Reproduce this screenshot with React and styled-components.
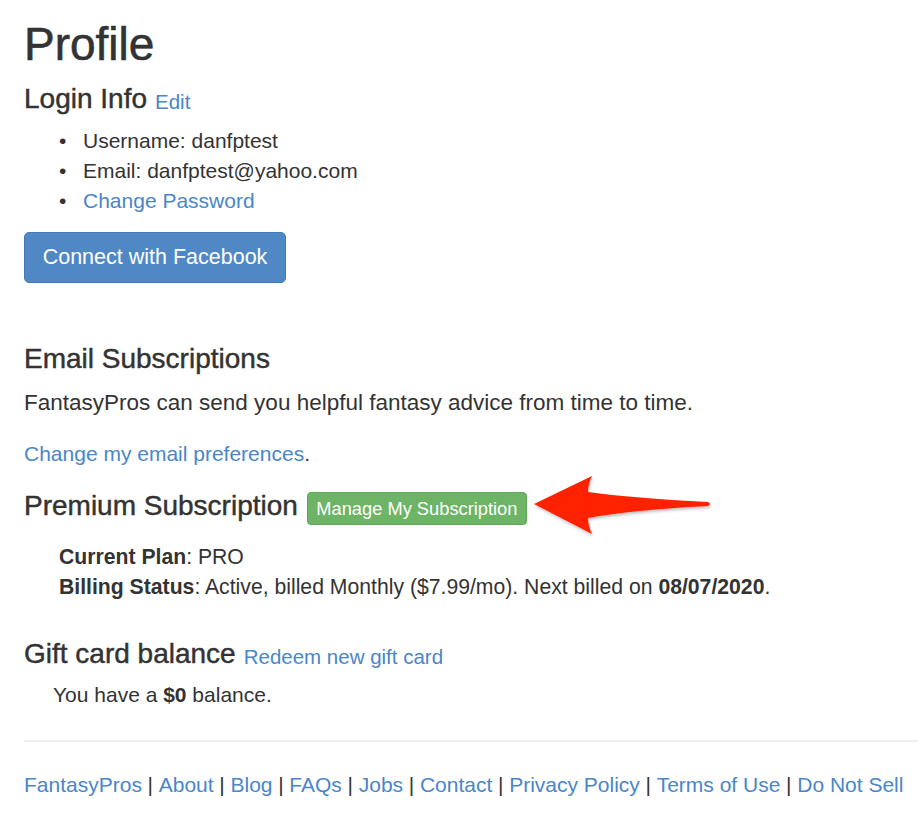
import React from "react";
import styled, { createGlobalStyle } from "styled-components";

const Global = createGlobalStyle`
  html, body { margin: 0; padding: 0; background: #fff; }
  body {
    font-family: "Liberation Sans", Arial, Helvetica, sans-serif;
    font-size: 21px;
    line-height: 30px;
    color: #333;
  }
  a { color: #4a86c8; text-decoration: none; }
`;

const Page = styled.div`
  padding: 0 0 0 24px;
`;

const Title = styled.h1`
  font-size: 46px;
  line-height: 50px;
  font-weight: 400;
  -webkit-text-stroke: 0.6px #333;
  margin: 19px 0 0;
`;

const Heading = styled.h3`
  display: flex;
  align-items: flex-start;
  position: relative;
  font-size: 28px;
  line-height: 31px;
  font-weight: 400;
  -webkit-text-stroke: 0.45px #333;
  margin: ${(p) => p.$mt || 0}px 0 0;
`;

const HeadLink = styled.a`
  font-size: 20.5px;
  margin-left: 8px;
  margin-top: 3px;
  -webkit-text-stroke: 0;
`;

const List = styled.ul`
  list-style: none;
  margin: 9px 0 0;
  padding: 0 0 0 35px;
`;

const Item = styled.li`
  &::before {
    content: "•";
    display: inline-block;
    width: 24px;
  }
`;

const FbButton = styled.button`
  display: block;
  margin-top: 16px;
  width: 262px;
  height: 51px;
  background: #5088c5;
  border: 1px solid #4279b6;
  border-radius: 5px;
  color: #fff;
  font-family: inherit;
  font-size: 21.5px;
  padding: 0;
`;

const Para = styled.p`
  margin: ${(p) => p.$mt || 0}px 0 0;
  padding-left: ${(p) => p.$indent || 0}px;
  font-size: ${(p) => p.$size || 21}px;
`;

const GreenButton = styled.button`
  margin-left: 9px;
  margin-top: 2px;
  width: 220px;
  height: 33px;
  padding: 0;
  background: #6db466;
  border: 1px solid #5fa958;
  border-radius: 4px;
  color: #fff;
  font-family: inherit;
  font-size: 18.3px;
  line-height: 31px;
  -webkit-text-stroke: 0;
`;

const Arrow = styled.svg`
  position: absolute;
  left: 508px;
  top: -17px;
  overflow: visible;
`;

const Rule = styled.hr`
  border: 0;
  border-top: 2px solid #eee;
  margin: 30px 0 0;
`;

const Footer = styled.div`
  margin-top: 28px;
  font-size: 21px;
`;

const Sep = styled.span`
  color: #333;
  margin: 0 5.7px;
`;

const links = [
  "FantasyPros",
  "About",
  "Blog",
  "FAQs",
  "Jobs",
  "Contact",
  "Privacy Policy",
  "Terms of Use",
  "Do Not Sell",
];

export default function App() {
  return (
    <>
      <Global />
      <Page>
        <Title>Profile</Title>
        <Heading $mt={14}>
          Login Info <HeadLink href="#">Edit</HeadLink>
        </Heading>
        <List>
          <Item>Username: danfptest</Item>
          <Item>Email: danfptest@yahoo.com</Item>
          <Item>
            <a href="#">Change Password</a>
          </Item>
        </List>
        <FbButton>Connect with Facebook</FbButton>

        <Heading $mt={60}>Email Subscriptions</Heading>
        <Para $mt={14} $size={22.5}>
          FantasyPros can send you helpful fantasy advice from time to time.
        </Para>
        <Para $mt={21}>
          <a href="#">Change my email preferences</a>.
        </Para>

        <Heading $mt={21}>
          Premium Subscription
          <GreenButton>Manage My Subscription</GreenButton>
          <Arrow width="180" height="62" viewBox="0 0 180 62">
            <defs>
              <filter id="sh" x="-10%" y="-20%" width="130%" height="150%">
                <feDropShadow dx="1" dy="2" stdDeviation="1.5" floodColor="#000" floodOpacity="0.25" />
              </filter>
            </defs>
            <path
              d="M2 31 L60 3 Q56 11 56 19 Q100 25 176 29 Q180 31 176 33 Q100 37 56 45 Q56 53 60 61 Z"
              fill="#ff2200"
              filter="url(#sh)"
            />
          </Arrow>
        </Heading>
        <Para $mt={17} $indent={35} $size={21.2}>
          <b>Current Plan</b>: PRO
        </Para>
        <Para $indent={35} $size={21.2}>
          <b>Billing Status</b>: Active, billed Monthly ($7.99/mo). Next billed on <b>08/07/2020</b>.
        </Para>

        <Heading $mt={36}>
          Gift card balance <HeadLink href="#">Redeem new gift card</HeadLink>
        </Heading>
        <Para $mt={8} $indent={29}>
          You have a <b>$0</b> balance.
        </Para>

        <Rule />
        <Footer>
          {links.map((l, i) => (
            <React.Fragment key={l}>
              {i > 0 && <Sep>|</Sep>}
              <a href="#">{l}</a>
            </React.Fragment>
          ))}
        </Footer>
      </Page>
    </>
  );
}
